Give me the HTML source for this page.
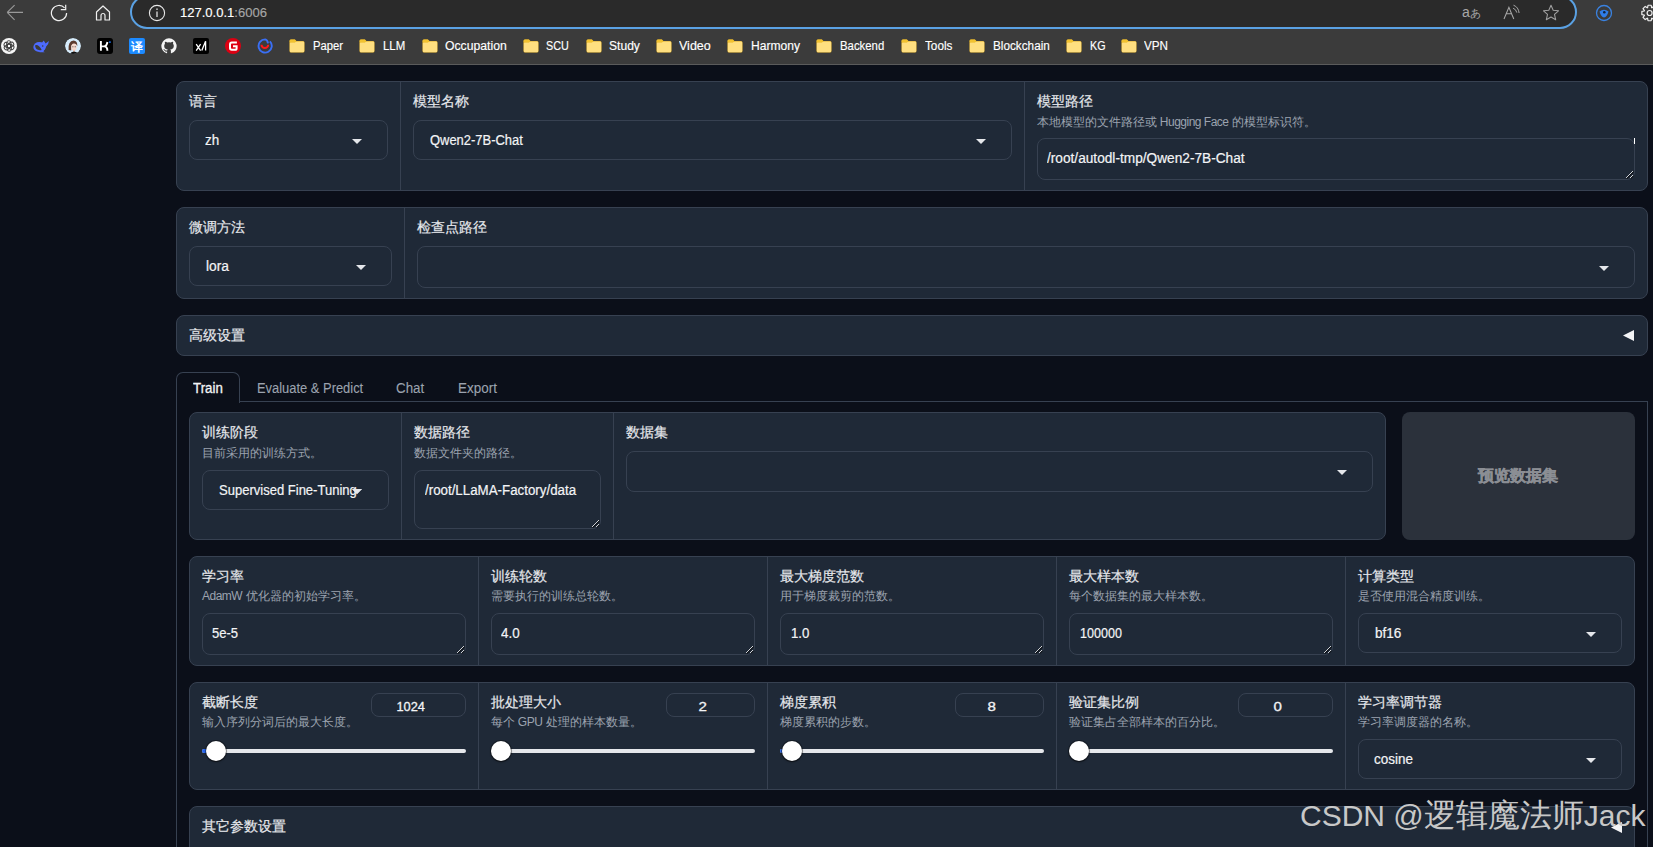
<!DOCTYPE html>
<html><head><meta charset="utf-8"><title>LLaMA Board</title>
<style>
html,body{margin:0;padding:0}
body{width:1653px;height:847px;overflow:hidden;background:#0b0f19;position:relative;font-family:"Liberation Sans",sans-serif}
.a{position:absolute}
.t{white-space:nowrap}
svg text{font-family:"Liberation Sans",sans-serif}
</style></head><body>

<div class="a" style="left:0px;top:0px;width:1653px;height:64px;background:#3b3b3b"></div>
<div class="a" style="left:0px;top:64px;width:1653px;height:1px;background:#5b5b5b"></div>
<svg class="a" style="left:6px;top:4px" width="18" height="18" viewBox="0 0 18 18"><path d="M1.2 8.4H17M1.2 8.4L8.6 1.2M1.2 8.4L8.6 15.8" stroke="#9a9a9a" stroke-width="1.1" fill="none"/></svg>
<svg class="a" style="left:50px;top:4px" width="18" height="18" viewBox="0 0 18 18"><path d="M16.6 9A7.6 7.6 0 1 1 14.6 3.9" stroke="#f0f0f0" stroke-width="1.2" fill="none"/><path d="M10.8 5.6H15.7V0.8" stroke="#f0f0f0" stroke-width="1.2" fill="none"/></svg>
<svg class="a" style="left:94px;top:4px" width="18" height="18" viewBox="0 0 18 18"><path d="M2.5 8L9 2L15.5 8V16H11V11.5A2 2 0 0 0 7 11.5V16H2.5Z" stroke="#f0f0f0" stroke-width="1.2" fill="none" stroke-linejoin="round"/></svg>
<div class="a" style="left:130px;top:-5px;width:1447px;height:34px;border:2px solid #5aa1e3;border-radius:17px;box-sizing:border-box;background:#2a2a2a"></div>
<svg class="a" style="left:148px;top:4px" width="18" height="18" viewBox="0 0 18 18"><circle cx="9" cy="9" r="7.6" stroke="#e8e8e8" stroke-width="1.1" fill="none"/><path d="M9 7.5V13" stroke="#bdbdbd" stroke-width="1.6"/><circle cx="9" cy="5.2" r="0.9" fill="#bdbdbd"/></svg>
<svg class="a" style="left:180.4px;top:0px" width="110" height="26"><text x="0" y="17.4" font-size="13.5" fill="#ffffff" textLength="87" lengthAdjust="spacingAndGlyphs" stroke="#ffffff" stroke-width="0.15">127.0.0.1<tspan fill="#a6a6a6" stroke="#a6a6a6">:6006</tspan></text></svg>
<div class="a t" style="left:1462px;top:2px;font-size:14px;line-height:20px;color:#a8a8a8;font-weight:normal;">a<span style="font-size:11px;position:relative;top:-0.5px">あ</span></div>
<svg class="a" style="left:1503px;top:4px" width="18" height="18" viewBox="0 0 18 18"><path d="M1 15L5.9 3.4L10.8 15M2.7 9.8H9.1" stroke="#a8a8a8" stroke-width="1.05" fill="none"/><path d="M10.1 4.2Q13.2 5.4 13.8 8.6M10.5 1.2Q15.4 3 16.1 9" stroke="#a8a8a8" stroke-width="1" fill="none"/></svg>
<svg class="a" style="left:1542px;top:4px" width="18" height="18" viewBox="0 0 18 18"><path d="M9 1.3L11.2 6.3L16.5 6.8L12.5 10.4L13.7 15.8L9 13L4.3 15.8L5.5 10.4L1.5 6.8L6.8 6.3Z" stroke="#a0a0a0" stroke-width="1.05" fill="none" stroke-linejoin="round"/></svg>
<svg class="a" style="left:1595px;top:4px" width="18" height="18" viewBox="0 0 18 18"><circle cx="9" cy="9" r="7.5" stroke="#3a82e0" stroke-width="1.3" fill="none"/><path d="M4.5 7.5Q9 4 13.5 7.5Q12 13 9 13.5Q6 13 4.5 7.5Z" fill="#2f7de8"/><circle cx="9.3" cy="8.3" r="1.3" fill="#10233f"/></svg>
<svg class="a" style="left:1638px;top:3px" width="15" height="20" viewBox="0 0 15 20"><path d="M16.93 7.99L19.34 8.43L19.34 11.57L16.93 12.01L16.79 12.35L18.18 14.36L15.96 16.58L13.95 15.19L13.61 15.33L13.17 17.74L10.03 17.74L9.59 15.33L9.25 15.19L7.24 16.58L5.02 14.36L6.41 12.35L6.27 12.01L3.86 11.57L3.86 8.43L6.27 7.99L6.41 7.65L5.02 5.64L7.24 3.42L9.25 4.81L9.59 4.67L10.03 2.26L13.17 2.26L13.61 4.67L13.95 4.81L15.96 3.42L18.18 5.64L16.79 7.65Z" stroke="#f0f0f0" stroke-width="1.2" fill="none" stroke-linejoin="round"/><circle cx="11.6" cy="10" r="2.5" stroke="#f0f0f0" stroke-width="1.2" fill="none"/></svg>
<svg class="a" style="left:1px;top:38px" width="16" height="16" viewBox="0 0 16 16"><circle cx="8" cy="8" r="8" fill="#f6f6f6"/><g stroke="#3a3a3a" stroke-width="0.9" fill="none"><rect x="5.6" y="2.7" width="4.4" height="7" rx="2.2" transform="rotate(0 8 8)"/><rect x="5.6" y="2.7" width="4.4" height="7" rx="2.2" transform="rotate(60 8 8)"/><rect x="5.6" y="2.7" width="4.4" height="7" rx="2.2" transform="rotate(120 8 8)"/><rect x="5.6" y="2.7" width="4.4" height="7" rx="2.2" transform="rotate(180 8 8)"/><rect x="5.6" y="2.7" width="4.4" height="7" rx="2.2" transform="rotate(240 8 8)"/><rect x="5.6" y="2.7" width="4.4" height="7" rx="2.2" transform="rotate(300 8 8)"/></g><circle cx="8" cy="8" r="1.2" fill="#fff"/></svg>
<svg class="a" style="left:33px;top:40px" width="17" height="13" viewBox="0 0 17 13"><ellipse cx="6.3" cy="7" rx="6" ry="5.1" fill="#4d6bfe"/><path d="M8.6 3.2L10.6 0.6Q11.8 2.2 12.6 3.4L15.9 0.9Q15.6 4.6 13.2 6.6Q12.6 9.6 10.3 11.2L11.8 12.2H6.5Z" fill="#4d6bfe"/><path d="M2.1 5.3Q5.5 3.9 8.7 10Q5.2 10.6 3.4 9.1Q1.9 7.5 2.1 5.3Z" fill="#3b3b3b"/><circle cx="9.7" cy="6" r="0.8" fill="#3b3b3b"/></svg>
<svg class="a" style="left:65px;top:38px" width="16" height="16" viewBox="0 0 16 16"><defs><clipPath id="cav"><circle cx="8" cy="8" r="8"/></clipPath></defs><g clip-path="url(#cav)"><circle cx="8" cy="8" r="8" fill="#d6ecfb"/><path d="M3.6 12Q2.8 3 8.6 2.4Q12.6 2.6 12.3 8.2L11 6.2Q8.4 5.6 6.4 7.6L6.2 12.4Z" fill="#5b3a2e"/><ellipse cx="9" cy="8.9" rx="2.7" ry="3.5" fill="#f6d8cc"/><circle cx="7.9" cy="8.7" r="0.55" fill="#333"/><circle cx="10.2" cy="8.7" r="0.55" fill="#333"/><rect x="8" y="11.8" width="2" height="2" fill="#f0c9bb"/><path d="M4.8 16.5Q5.6 13.4 9 13.4Q12.4 13.4 13.2 16.5Z" fill="#111"/></g></svg>
<svg class="a" style="left:97px;top:38px" width="16" height="16" viewBox="0 0 16 16"><rect width="16" height="16" rx="3" fill="#000"/><path d="M3.9 3V12.8M3.9 8.4H7.2Q9.7 8.2 10.4 4M7.2 8.4Q10.4 8.6 10.4 12.8" stroke="#fff" stroke-width="1.9" fill="none"/><circle cx="12.9" cy="4.1" r="0.95" fill="#1e7bff"/></svg>
<svg class="a" style="left:129px;top:38px" width="16" height="16" viewBox="0 0 16 16"><rect width="16" height="16" rx="2" fill="#1c8aff"/><text x="8" y="12.5" text-anchor="middle" font-size="12" fill="#fff" font-weight="bold">译</text></svg>
<svg class="a" style="left:161px;top:38px" width="16" height="16" viewBox="0 0 16 16"><path d="M8 0.3A7.7 7.7 0 0 0 5.6 15.3C6 15.4 6.1 15.2 6.1 15V13.6C4 14.1 3.5 12.6 3.5 12.6C3.2 11.7 2.6 11.4 2.6 11.4C1.9 10.9 2.7 10.9 2.7 10.9C3.5 11 3.9 11.7 3.9 11.7C4.6 12.9 5.8 12.6 6.2 12.4C6.2 11.9 6.5 11.6 6.7 11.4C5 11.2 3.2 10.6 3.2 7.7C3.2 6.9 3.5 6.2 4 5.7C3.9 5.5 3.6 4.7 4.1 3.7C4.1 3.7 4.7 3.5 6.1 4.4A7.3 7.3 0 0 1 10 4.4C11.3 3.5 11.9 3.7 11.9 3.7C12.4 4.7 12.1 5.5 12 5.7C12.5 6.2 12.8 6.9 12.8 7.7C12.8 10.6 11 11.2 9.3 11.4C9.6 11.7 9.9 12.1 9.9 12.8V15C9.9 15.2 10 15.4 10.4 15.3A7.7 7.7 0 0 0 8 0.3Z" fill="#f4f4f4"/></svg>
<svg class="a" style="left:193px;top:38px" width="16" height="16" viewBox="0 0 16 16"><rect width="16" height="16" rx="2" fill="#000"/><path d="M3.2 6.2L7.6 12.6M7.6 6.2L3.2 12.6M8.8 12.6L12.6 3.2V12.6" stroke="#fff" stroke-width="1.3" fill="none"/></svg>
<svg class="a" style="left:225px;top:38px" width="16" height="16" viewBox="0 0 16 16"><circle cx="8" cy="8" r="8" fill="#dc0012"/><path d="M11.9 4.4H6.8Q5 4.4 5 6.4V10.1Q5 11.8 6.8 11.8H10.1Q11.6 11.8 11.6 10.2V8.3H8" stroke="#fff" stroke-width="2" fill="none"/></svg>
<svg class="a" style="left:257px;top:38px" width="16" height="16" viewBox="0 0 16 16"><path d="M12.9 3.4A6.6 6.6 0 1 1 8.2 1.4Q10.5 1.7 11 5.4" stroke="#3a6ff5" stroke-width="1.9" fill="none"/><path d="M3.5 6.7A4.35 4.35 0 0 0 12.2 6.7H10.2A2.35 2.35 0 0 1 5.5 6.7Z" fill="#ff1a1a"/></svg>
<svg class="a" style="left:289px;top:39px" width="16" height="14" viewBox="0 0 16 14"><path d="M0.5 2A1.5 1.5 0 0 1 2 0.5H6L7.5 2H14A1.5 1.5 0 0 1 15.5 3.5V12A1.5 1.5 0 0 1 14 13.5H2A1.5 1.5 0 0 1 0.5 12Z" fill="#d9a92a"/><path d="M0.8 4A1 1 0 0 1 1.8 3.2H6L7.5 2.4H14.2A1.2 1.2 0 0 1 15.2 3.4V12A1.2 1.2 0 0 1 14 13.2H2A1.2 1.2 0 0 1 0.8 12Z" fill="#ffdf80"/><path d="M0.6 1.8Q0.7 0.6 2 0.6H5.8L7.4 2.2L5.8 3.5H0.6Z" fill="#f2c230"/></svg>
<svg class="a" style="left:313.1px;top:36.1px" width="49" height="19"><text x="0.0" y="14.4" font-size="12" fill="#ffffff" font-weight="normal" textLength="30.0" lengthAdjust="spacingAndGlyphs" text-anchor="start" stroke="#ffffff" stroke-width="0.15">Paper</text></svg>
<svg class="a" style="left:359px;top:39px" width="16" height="14" viewBox="0 0 16 14"><path d="M0.5 2A1.5 1.5 0 0 1 2 0.5H6L7.5 2H14A1.5 1.5 0 0 1 15.5 3.5V12A1.5 1.5 0 0 1 14 13.5H2A1.5 1.5 0 0 1 0.5 12Z" fill="#d9a92a"/><path d="M0.8 4A1 1 0 0 1 1.8 3.2H6L7.5 2.4H14.2A1.2 1.2 0 0 1 15.2 3.4V12A1.2 1.2 0 0 1 14 13.2H2A1.2 1.2 0 0 1 0.8 12Z" fill="#ffdf80"/><path d="M0.6 1.8Q0.7 0.6 2 0.6H5.8L7.4 2.2L5.8 3.5H0.6Z" fill="#f2c230"/></svg>
<svg class="a" style="left:382.7px;top:36.1px" width="41" height="19"><text x="0.0" y="14.4" font-size="12" fill="#ffffff" font-weight="normal" textLength="22.2" lengthAdjust="spacingAndGlyphs" text-anchor="start" stroke="#ffffff" stroke-width="0.15">LLM</text></svg>
<svg class="a" style="left:422px;top:39px" width="16" height="14" viewBox="0 0 16 14"><path d="M0.5 2A1.5 1.5 0 0 1 2 0.5H6L7.5 2H14A1.5 1.5 0 0 1 15.5 3.5V12A1.5 1.5 0 0 1 14 13.5H2A1.5 1.5 0 0 1 0.5 12Z" fill="#d9a92a"/><path d="M0.8 4A1 1 0 0 1 1.8 3.2H6L7.5 2.4H14.2A1.2 1.2 0 0 1 15.2 3.4V12A1.2 1.2 0 0 1 14 13.2H2A1.2 1.2 0 0 1 0.8 12Z" fill="#ffdf80"/><path d="M0.6 1.8Q0.7 0.6 2 0.6H5.8L7.4 2.2L5.8 3.5H0.6Z" fill="#f2c230"/></svg>
<svg class="a" style="left:445.1px;top:36.1px" width="81" height="19"><text x="0.0" y="14.4" font-size="12" fill="#ffffff" font-weight="normal" textLength="61.7" lengthAdjust="spacingAndGlyphs" text-anchor="start" stroke="#ffffff" stroke-width="0.15">Occupation</text></svg>
<svg class="a" style="left:523px;top:39px" width="16" height="14" viewBox="0 0 16 14"><path d="M0.5 2A1.5 1.5 0 0 1 2 0.5H6L7.5 2H14A1.5 1.5 0 0 1 15.5 3.5V12A1.5 1.5 0 0 1 14 13.5H2A1.5 1.5 0 0 1 0.5 12Z" fill="#d9a92a"/><path d="M0.8 4A1 1 0 0 1 1.8 3.2H6L7.5 2.4H14.2A1.2 1.2 0 0 1 15.2 3.4V12A1.2 1.2 0 0 1 14 13.2H2A1.2 1.2 0 0 1 0.8 12Z" fill="#ffdf80"/><path d="M0.6 1.8Q0.7 0.6 2 0.6H5.8L7.4 2.2L5.8 3.5H0.6Z" fill="#f2c230"/></svg>
<svg class="a" style="left:546.2px;top:36.1px" width="42" height="19"><text x="0.0" y="14.4" font-size="12" fill="#ffffff" font-weight="normal" textLength="22.8" lengthAdjust="spacingAndGlyphs" text-anchor="start" stroke="#ffffff" stroke-width="0.15">SCU</text></svg>
<svg class="a" style="left:586px;top:39px" width="16" height="14" viewBox="0 0 16 14"><path d="M0.5 2A1.5 1.5 0 0 1 2 0.5H6L7.5 2H14A1.5 1.5 0 0 1 15.5 3.5V12A1.5 1.5 0 0 1 14 13.5H2A1.5 1.5 0 0 1 0.5 12Z" fill="#d9a92a"/><path d="M0.8 4A1 1 0 0 1 1.8 3.2H6L7.5 2.4H14.2A1.2 1.2 0 0 1 15.2 3.4V12A1.2 1.2 0 0 1 14 13.2H2A1.2 1.2 0 0 1 0.8 12Z" fill="#ffdf80"/><path d="M0.6 1.8Q0.7 0.6 2 0.6H5.8L7.4 2.2L5.8 3.5H0.6Z" fill="#f2c230"/></svg>
<svg class="a" style="left:609.2px;top:36.1px" width="50" height="19"><text x="0.0" y="14.4" font-size="12" fill="#ffffff" font-weight="normal" textLength="30.9" lengthAdjust="spacingAndGlyphs" text-anchor="start" stroke="#ffffff" stroke-width="0.15">Study</text></svg>
<svg class="a" style="left:656px;top:39px" width="16" height="14" viewBox="0 0 16 14"><path d="M0.5 2A1.5 1.5 0 0 1 2 0.5H6L7.5 2H14A1.5 1.5 0 0 1 15.5 3.5V12A1.5 1.5 0 0 1 14 13.5H2A1.5 1.5 0 0 1 0.5 12Z" fill="#d9a92a"/><path d="M0.8 4A1 1 0 0 1 1.8 3.2H6L7.5 2.4H14.2A1.2 1.2 0 0 1 15.2 3.4V12A1.2 1.2 0 0 1 14 13.2H2A1.2 1.2 0 0 1 0.8 12Z" fill="#ffdf80"/><path d="M0.6 1.8Q0.7 0.6 2 0.6H5.8L7.4 2.2L5.8 3.5H0.6Z" fill="#f2c230"/></svg>
<svg class="a" style="left:679.1px;top:36.1px" width="51" height="19"><text x="0.0" y="14.4" font-size="12" fill="#ffffff" font-weight="normal" textLength="31.8" lengthAdjust="spacingAndGlyphs" text-anchor="start" stroke="#ffffff" stroke-width="0.15">Video</text></svg>
<svg class="a" style="left:727px;top:39px" width="16" height="14" viewBox="0 0 16 14"><path d="M0.5 2A1.5 1.5 0 0 1 2 0.5H6L7.5 2H14A1.5 1.5 0 0 1 15.5 3.5V12A1.5 1.5 0 0 1 14 13.5H2A1.5 1.5 0 0 1 0.5 12Z" fill="#d9a92a"/><path d="M0.8 4A1 1 0 0 1 1.8 3.2H6L7.5 2.4H14.2A1.2 1.2 0 0 1 15.2 3.4V12A1.2 1.2 0 0 1 14 13.2H2A1.2 1.2 0 0 1 0.8 12Z" fill="#ffdf80"/><path d="M0.6 1.8Q0.7 0.6 2 0.6H5.8L7.4 2.2L5.8 3.5H0.6Z" fill="#f2c230"/></svg>
<svg class="a" style="left:750.8px;top:36.1px" width="68" height="19"><text x="0.0" y="14.4" font-size="12" fill="#ffffff" font-weight="normal" textLength="49.0" lengthAdjust="spacingAndGlyphs" text-anchor="start" stroke="#ffffff" stroke-width="0.15">Harmony</text></svg>
<svg class="a" style="left:816px;top:39px" width="16" height="14" viewBox="0 0 16 14"><path d="M0.5 2A1.5 1.5 0 0 1 2 0.5H6L7.5 2H14A1.5 1.5 0 0 1 15.5 3.5V12A1.5 1.5 0 0 1 14 13.5H2A1.5 1.5 0 0 1 0.5 12Z" fill="#d9a92a"/><path d="M0.8 4A1 1 0 0 1 1.8 3.2H6L7.5 2.4H14.2A1.2 1.2 0 0 1 15.2 3.4V12A1.2 1.2 0 0 1 14 13.2H2A1.2 1.2 0 0 1 0.8 12Z" fill="#ffdf80"/><path d="M0.6 1.8Q0.7 0.6 2 0.6H5.8L7.4 2.2L5.8 3.5H0.6Z" fill="#f2c230"/></svg>
<svg class="a" style="left:840.1px;top:36.1px" width="63" height="19"><text x="0.0" y="14.4" font-size="12" fill="#ffffff" font-weight="normal" textLength="44.2" lengthAdjust="spacingAndGlyphs" text-anchor="start" stroke="#ffffff" stroke-width="0.15">Backend</text></svg>
<svg class="a" style="left:901px;top:39px" width="16" height="14" viewBox="0 0 16 14"><path d="M0.5 2A1.5 1.5 0 0 1 2 0.5H6L7.5 2H14A1.5 1.5 0 0 1 15.5 3.5V12A1.5 1.5 0 0 1 14 13.5H2A1.5 1.5 0 0 1 0.5 12Z" fill="#d9a92a"/><path d="M0.8 4A1 1 0 0 1 1.8 3.2H6L7.5 2.4H14.2A1.2 1.2 0 0 1 15.2 3.4V12A1.2 1.2 0 0 1 14 13.2H2A1.2 1.2 0 0 1 0.8 12Z" fill="#ffdf80"/><path d="M0.6 1.8Q0.7 0.6 2 0.6H5.8L7.4 2.2L5.8 3.5H0.6Z" fill="#f2c230"/></svg>
<svg class="a" style="left:924.7px;top:36.1px" width="46" height="19"><text x="0.0" y="14.4" font-size="12" fill="#ffffff" font-weight="normal" textLength="27.4" lengthAdjust="spacingAndGlyphs" text-anchor="start" stroke="#ffffff" stroke-width="0.15">Tools</text></svg>
<svg class="a" style="left:969px;top:39px" width="16" height="14" viewBox="0 0 16 14"><path d="M0.5 2A1.5 1.5 0 0 1 2 0.5H6L7.5 2H14A1.5 1.5 0 0 1 15.5 3.5V12A1.5 1.5 0 0 1 14 13.5H2A1.5 1.5 0 0 1 0.5 12Z" fill="#d9a92a"/><path d="M0.8 4A1 1 0 0 1 1.8 3.2H6L7.5 2.4H14.2A1.2 1.2 0 0 1 15.2 3.4V12A1.2 1.2 0 0 1 14 13.2H2A1.2 1.2 0 0 1 0.8 12Z" fill="#ffdf80"/><path d="M0.6 1.8Q0.7 0.6 2 0.6H5.8L7.4 2.2L5.8 3.5H0.6Z" fill="#f2c230"/></svg>
<svg class="a" style="left:993.0px;top:36.1px" width="76" height="19"><text x="0.0" y="14.4" font-size="12" fill="#ffffff" font-weight="normal" textLength="56.8" lengthAdjust="spacingAndGlyphs" text-anchor="start" stroke="#ffffff" stroke-width="0.15">Blockchain</text></svg>
<svg class="a" style="left:1066px;top:39px" width="16" height="14" viewBox="0 0 16 14"><path d="M0.5 2A1.5 1.5 0 0 1 2 0.5H6L7.5 2H14A1.5 1.5 0 0 1 15.5 3.5V12A1.5 1.5 0 0 1 14 13.5H2A1.5 1.5 0 0 1 0.5 12Z" fill="#d9a92a"/><path d="M0.8 4A1 1 0 0 1 1.8 3.2H6L7.5 2.4H14.2A1.2 1.2 0 0 1 15.2 3.4V12A1.2 1.2 0 0 1 14 13.2H2A1.2 1.2 0 0 1 0.8 12Z" fill="#ffdf80"/><path d="M0.6 1.8Q0.7 0.6 2 0.6H5.8L7.4 2.2L5.8 3.5H0.6Z" fill="#f2c230"/></svg>
<svg class="a" style="left:1089.5px;top:36.1px" width="34" height="19"><text x="0.0" y="14.4" font-size="12" fill="#ffffff" font-weight="normal" textLength="15.5" lengthAdjust="spacingAndGlyphs" text-anchor="start" stroke="#ffffff" stroke-width="0.15">KG</text></svg>
<svg class="a" style="left:1121px;top:39px" width="16" height="14" viewBox="0 0 16 14"><path d="M0.5 2A1.5 1.5 0 0 1 2 0.5H6L7.5 2H14A1.5 1.5 0 0 1 15.5 3.5V12A1.5 1.5 0 0 1 14 13.5H2A1.5 1.5 0 0 1 0.5 12Z" fill="#d9a92a"/><path d="M0.8 4A1 1 0 0 1 1.8 3.2H6L7.5 2.4H14.2A1.2 1.2 0 0 1 15.2 3.4V12A1.2 1.2 0 0 1 14 13.2H2A1.2 1.2 0 0 1 0.8 12Z" fill="#ffdf80"/><path d="M0.6 1.8Q0.7 0.6 2 0.6H5.8L7.4 2.2L5.8 3.5H0.6Z" fill="#f2c230"/></svg>
<svg class="a" style="left:1144.2px;top:36.1px" width="43" height="19"><text x="0.0" y="14.4" font-size="12" fill="#ffffff" font-weight="normal" textLength="24.0" lengthAdjust="spacingAndGlyphs" text-anchor="start" stroke="#ffffff" stroke-width="0.15">VPN</text></svg>
<div class="a" style="left:176px;top:81px;width:1472px;height:110px;border:1px solid #374151;border-radius:8px;box-sizing:border-box;background:#1f2937"></div>
<div class="a" style="left:400px;top:82px;width:1px;height:108px;background:#374151"></div>
<div class="a" style="left:1024px;top:82px;width:1px;height:108px;background:#374151"></div>
<div class="a t" style="left:189px;top:91px;font-size:14px;line-height:20px;color:#e5e7eb;font-weight:normal;-webkit-text-stroke:0.2px #e5e7eb">语言</div>
<div class="a" style="left:189px;top:120px;width:199px;height:40px;border:1px solid #374151;border-radius:8px;box-sizing:border-box;background:#1f2937"></div>
<svg class="a" style="left:352.0px;top:138.5px" width="10" height="5"><path d="M0 0H10L5.0 5Z" fill="#e5e7eb"/></svg>
<svg class="a" style="left:205.4px;top:128.3px" width="33" height="22"><text x="0.0" y="16.8" font-size="14" fill="#f3f4f6" font-weight="normal" textLength="14.2" lengthAdjust="spacingAndGlyphs" text-anchor="start" stroke="#f3f4f6" stroke-width="0.2">zh</text></svg>
<div class="a t" style="left:413px;top:91px;font-size:14px;line-height:20px;color:#e5e7eb;font-weight:normal;-webkit-text-stroke:0.2px #e5e7eb">模型名称</div>
<div class="a" style="left:413px;top:120px;width:599px;height:40px;border:1px solid #374151;border-radius:8px;box-sizing:border-box;background:#1f2937"></div>
<svg class="a" style="left:976.0px;top:138.5px" width="10" height="5"><path d="M0 0H10L5.0 5Z" fill="#e5e7eb"/></svg>
<svg class="a" style="left:430.3px;top:128.3px" width="112" height="22"><text x="0.0" y="16.8" font-size="14" fill="#f3f4f6" font-weight="normal" textLength="92.8" lengthAdjust="spacingAndGlyphs" text-anchor="start" stroke="#f3f4f6" stroke-width="0.2">Qwen2-7B-Chat</text></svg>
<div class="a t" style="left:1037px;top:91px;font-size:14px;line-height:20px;color:#e5e7eb;font-weight:normal;-webkit-text-stroke:0.2px #e5e7eb">模型路径</div>
<div class="a t" style="left:1037px;top:114px;font-size:12px;line-height:16px;color:#9ca3af;font-weight:normal;">本地模型的文件路径或<span style="letter-spacing:-0.5px"> Hugging Face</span> 的模型标识符。</div>
<div class="a" style="left:1037px;top:138px;width:598px;height:42px;border:1px solid #374151;border-radius:8px;box-sizing:border-box;background:#1f2937"></div>
<svg class="a" style="left:1624.5px;top:170px" width="10" height="10"><path d="M1.6 8.6L8.6 1.6M5.6 8.6L8.6 5.6" stroke="#000" stroke-opacity=".6" stroke-width="1.2"/><path d="M1 8L8 1M5 8L8 5" stroke="#d0d3d8" stroke-width="1"/></svg>
<svg class="a" style="left:1047.1px;top:146.2px" width="217" height="22"><text x="0.0" y="16.8" font-size="14" fill="#f3f4f6" font-weight="normal" textLength="197.6" lengthAdjust="spacingAndGlyphs" text-anchor="start" stroke="#f3f4f6" stroke-width="0.2">/root/autodl-tmp/Qwen2-7B-Chat</text></svg>
<div class="a" style="left:1634px;top:138px;width:1px;height:6px;background:#ffffff"></div>
<div class="a" style="left:176px;top:207px;width:1472px;height:92px;border:1px solid #374151;border-radius:8px;box-sizing:border-box;background:#1f2937"></div>
<div class="a" style="left:404px;top:208px;width:1px;height:90px;background:#374151"></div>
<div class="a t" style="left:189px;top:217px;font-size:14px;line-height:20px;color:#e5e7eb;font-weight:normal;-webkit-text-stroke:0.2px #e5e7eb">微调方法</div>
<div class="a" style="left:189px;top:246px;width:203px;height:40px;border:1px solid #374151;border-radius:8px;box-sizing:border-box;background:#1f2937"></div>
<svg class="a" style="left:356.0px;top:264.5px" width="10" height="5"><path d="M0 0H10L5.0 5Z" fill="#e5e7eb"/></svg>
<svg class="a" style="left:205.8px;top:254.2px" width="42" height="22"><text x="0.0" y="16.8" font-size="14" fill="#f3f4f6" font-weight="normal" textLength="23.0" lengthAdjust="spacingAndGlyphs" text-anchor="start" stroke="#f3f4f6" stroke-width="0.2">lora</text></svg>
<div class="a t" style="left:417px;top:217px;font-size:14px;line-height:20px;color:#e5e7eb;font-weight:normal;-webkit-text-stroke:0.2px #e5e7eb">检查点路径</div>
<div class="a" style="left:417px;top:246px;width:1218px;height:42px;border:1px solid #374151;border-radius:8px;box-sizing:border-box;background:#1f2937"></div>
<svg class="a" style="left:1599.0px;top:265.5px" width="10" height="5"><path d="M0 0H10L5.0 5Z" fill="#e5e7eb"/></svg>
<div class="a" style="left:176px;top:315px;width:1472px;height:41px;border:1px solid #374151;border-radius:8px;box-sizing:border-box;background:#1f2937"></div>
<div class="a t" style="left:189px;top:325px;font-size:14px;line-height:20px;color:#e5e7eb;font-weight:normal;-webkit-text-stroke:0.2px #e5e7eb">高级设置</div>
<svg class="a" style="left:1623px;top:330px" width="11" height="11" viewBox="0 0 11 11"><path d="M0 5.5L11 0V11Z" fill="#f3f4f6"/></svg>
<div class="a" style="left:176px;top:401px;width:1472px;height:1px;background:#374151"></div>
<div class="a" style="left:176px;top:372px;width:64px;height:31px;border:1px solid #374151;border-bottom:none;border-radius:7px 7px 0 0;box-sizing:border-box;background:#0b0f19"></div>
<svg class="a" style="left:192.9px;top:375.7px" width="49" height="22"><text x="0.0" y="16.8" font-size="14" fill="#f3f4f6" font-weight="normal" textLength="29.8" lengthAdjust="spacingAndGlyphs" text-anchor="start" stroke="#f3f4f6" stroke-width="0.3">Train</text></svg>
<svg class="a" style="left:256.5px;top:375.7px" width="125" height="22"><text x="0.0" y="16.8" font-size="14" fill="#9ca3af" font-weight="normal" textLength="106.2" lengthAdjust="spacingAndGlyphs" text-anchor="start" stroke="#9ca3af" stroke-width="0.1">Evaluate &amp; Predict</text></svg>
<svg class="a" style="left:395.9px;top:375.7px" width="47" height="22"><text x="0.0" y="16.8" font-size="14" fill="#9ca3af" font-weight="normal" textLength="28.2" lengthAdjust="spacingAndGlyphs" text-anchor="start" stroke="#9ca3af" stroke-width="0.1">Chat</text></svg>
<svg class="a" style="left:457.5px;top:375.7px" width="58" height="22"><text x="0.0" y="16.8" font-size="14" fill="#9ca3af" font-weight="normal" textLength="38.9" lengthAdjust="spacingAndGlyphs" text-anchor="start" stroke="#9ca3af" stroke-width="0.1">Export</text></svg>
<div class="a" style="left:176px;top:401px;width:1px;height:446px;background:#374151"></div>
<div class="a" style="left:1647px;top:401px;width:1px;height:446px;background:#374151"></div>
<div class="a" style="left:189px;top:412px;width:1197px;height:128px;border:1px solid #374151;border-radius:8px;box-sizing:border-box;background:#1f2937"></div>
<div class="a" style="left:401px;top:413px;width:1px;height:126px;background:#374151"></div>
<div class="a" style="left:613px;top:413px;width:1px;height:126px;background:#374151"></div>
<div class="a t" style="left:202px;top:422px;font-size:14px;line-height:20px;color:#e5e7eb;font-weight:normal;-webkit-text-stroke:0.2px #e5e7eb">训练阶段</div>
<div class="a t" style="left:202px;top:445px;font-size:12px;line-height:16px;color:#9ca3af;font-weight:normal;">目前采用的训练方式。</div>
<div class="a" style="left:202px;top:470px;width:187px;height:40px;border:1px solid #374151;border-radius:8px;box-sizing:border-box;background:#1f2937"></div>
<svg class="a" style="left:352.0px;top:488.5px" width="10" height="5"><path d="M0 0H10L5.0 5Z" fill="#e5e7eb"/></svg>
<svg class="a" style="left:218.6px;top:478.2px" width="157" height="22"><text x="0.0" y="16.8" font-size="14" fill="#f3f4f6" font-weight="normal" textLength="137.8" lengthAdjust="spacingAndGlyphs" text-anchor="start" stroke="#f3f4f6" stroke-width="0.2">Supervised Fine-Tuning</text></svg>
<svg class="a" style="left:352.0px;top:488.5px" width="10" height="5"><path d="M0 0H10L5.0 5Z" fill="#e5e7eb"/></svg>
<div class="a t" style="left:414px;top:422px;font-size:14px;line-height:20px;color:#e5e7eb;font-weight:normal;-webkit-text-stroke:0.2px #e5e7eb">数据路径</div>
<div class="a t" style="left:414px;top:445px;font-size:12px;line-height:16px;color:#9ca3af;font-weight:normal;">数据文件夹的路径。</div>
<div class="a" style="left:414px;top:470px;width:187px;height:59px;border:1px solid #374151;border-radius:8px;box-sizing:border-box;background:#1f2937"></div>
<svg class="a" style="left:590.5px;top:519px" width="10" height="10"><path d="M1.6 8.6L8.6 1.6M5.6 8.6L8.6 5.6" stroke="#000" stroke-opacity=".6" stroke-width="1.2"/><path d="M1 8L8 1M5 8L8 5" stroke="#d0d3d8" stroke-width="1"/></svg>
<svg class="a" style="left:424.7px;top:478.2px" width="170" height="22"><text x="0.0" y="16.8" font-size="14" fill="#f3f4f6" font-weight="normal" textLength="151.1" lengthAdjust="spacingAndGlyphs" text-anchor="start" stroke="#f3f4f6" stroke-width="0.2">/root/LLaMA-Factory/data</text></svg>
<div class="a t" style="left:626px;top:422px;font-size:14px;line-height:20px;color:#e5e7eb;font-weight:normal;-webkit-text-stroke:0.2px #e5e7eb">数据集</div>
<div class="a" style="left:626px;top:451px;width:747px;height:41px;border:1px solid #374151;border-radius:8px;box-sizing:border-box;background:#1f2937"></div>
<svg class="a" style="left:1337.0px;top:470.0px" width="10" height="5"><path d="M0 0H10L5.0 5Z" fill="#e5e7eb"/></svg>
<div class="a" style="left:1402px;top:412px;width:233px;height:128px;background:#2b313b;border-radius:8px"></div>
<div class="a t" style="left:1478px;top:465px;font-size:16px;line-height:22px;color:#8b8e94;font-weight:bold;-webkit-text-stroke:0.4px #8b8e94">预览数据集</div>
<div class="a" style="left:189px;top:556px;width:1446px;height:110px;border:1px solid #374151;border-radius:8px;box-sizing:border-box;background:#1f2937"></div>
<div class="a" style="left:478px;top:557px;width:1px;height:108px;background:#374151"></div>
<div class="a" style="left:767px;top:557px;width:1px;height:108px;background:#374151"></div>
<div class="a" style="left:1056px;top:557px;width:1px;height:108px;background:#374151"></div>
<div class="a" style="left:1345px;top:557px;width:1px;height:108px;background:#374151"></div>
<div class="a t" style="left:202px;top:566px;font-size:14px;line-height:20px;color:#e5e7eb;font-weight:normal;-webkit-text-stroke:0.2px #e5e7eb">学习率</div>
<div class="a t" style="left:202px;top:588px;font-size:12px;line-height:16px;color:#9ca3af;font-weight:normal;"><span style="letter-spacing:-0.5px">AdamW</span> 优化器的初始学习率。</div>
<div class="a" style="left:202px;top:613px;width:264px;height:42px;border:1px solid #374151;border-radius:8px;box-sizing:border-box;background:#1f2937"></div>
<svg class="a" style="left:455.5px;top:645px" width="10" height="10"><path d="M1.6 8.6L8.6 1.6M5.6 8.6L8.6 5.6" stroke="#000" stroke-opacity=".6" stroke-width="1.2"/><path d="M1 8L8 1M5 8L8 5" stroke="#d0d3d8" stroke-width="1"/></svg>
<svg class="a" style="left:212.3px;top:621.2px" width="45" height="22"><text x="0.0" y="16.8" font-size="14" fill="#f3f4f6" font-weight="normal" textLength="26.1" lengthAdjust="spacingAndGlyphs" text-anchor="start" stroke="#f3f4f6" stroke-width="0.2">5e-5</text></svg>
<div class="a t" style="left:491px;top:566px;font-size:14px;line-height:20px;color:#e5e7eb;font-weight:normal;-webkit-text-stroke:0.2px #e5e7eb">训练轮数</div>
<div class="a t" style="left:491px;top:588px;font-size:12px;line-height:16px;color:#9ca3af;font-weight:normal;">需要执行的训练总轮数。</div>
<div class="a" style="left:491px;top:613px;width:264px;height:42px;border:1px solid #374151;border-radius:8px;box-sizing:border-box;background:#1f2937"></div>
<svg class="a" style="left:744.5px;top:645px" width="10" height="10"><path d="M1.6 8.6L8.6 1.6M5.6 8.6L8.6 5.6" stroke="#000" stroke-opacity=".6" stroke-width="1.2"/><path d="M1 8L8 1M5 8L8 5" stroke="#d0d3d8" stroke-width="1"/></svg>
<svg class="a" style="left:501.1px;top:621.2px" width="38" height="22"><text x="0.0" y="16.8" font-size="14" fill="#f3f4f6" font-weight="normal" textLength="18.6" lengthAdjust="spacingAndGlyphs" text-anchor="start" stroke="#f3f4f6" stroke-width="0.2">4.0</text></svg>
<div class="a t" style="left:780px;top:566px;font-size:14px;line-height:20px;color:#e5e7eb;font-weight:normal;-webkit-text-stroke:0.2px #e5e7eb">最大梯度范数</div>
<div class="a t" style="left:780px;top:588px;font-size:12px;line-height:16px;color:#9ca3af;font-weight:normal;">用于梯度裁剪的范数。</div>
<div class="a" style="left:780px;top:613px;width:264px;height:42px;border:1px solid #374151;border-radius:8px;box-sizing:border-box;background:#1f2937"></div>
<svg class="a" style="left:1033.5px;top:645px" width="10" height="10"><path d="M1.6 8.6L8.6 1.6M5.6 8.6L8.6 5.6" stroke="#000" stroke-opacity=".6" stroke-width="1.2"/><path d="M1 8L8 1M5 8L8 5" stroke="#d0d3d8" stroke-width="1"/></svg>
<svg class="a" style="left:790.7px;top:621.2px" width="37" height="22"><text x="0.0" y="16.8" font-size="14" fill="#f3f4f6" font-weight="normal" textLength="18.4" lengthAdjust="spacingAndGlyphs" text-anchor="start" stroke="#f3f4f6" stroke-width="0.2">1.0</text></svg>
<div class="a t" style="left:1069px;top:566px;font-size:14px;line-height:20px;color:#e5e7eb;font-weight:normal;-webkit-text-stroke:0.2px #e5e7eb">最大样本数</div>
<div class="a t" style="left:1069px;top:588px;font-size:12px;line-height:16px;color:#9ca3af;font-weight:normal;">每个数据集的最大样本数。</div>
<div class="a" style="left:1069px;top:613px;width:264px;height:42px;border:1px solid #374151;border-radius:8px;box-sizing:border-box;background:#1f2937"></div>
<svg class="a" style="left:1322.5px;top:645px" width="10" height="10"><path d="M1.6 8.6L8.6 1.6M5.6 8.6L8.6 5.6" stroke="#000" stroke-opacity=".6" stroke-width="1.2"/><path d="M1 8L8 1M5 8L8 5" stroke="#d0d3d8" stroke-width="1"/></svg>
<svg class="a" style="left:1080.2px;top:621.2px" width="61" height="22"><text x="0.0" y="16.8" font-size="14" fill="#f3f4f6" font-weight="normal" textLength="41.9" lengthAdjust="spacingAndGlyphs" text-anchor="start" stroke="#f3f4f6" stroke-width="0.2">100000</text></svg>
<div class="a t" style="left:1358px;top:566px;font-size:14px;line-height:20px;color:#e5e7eb;font-weight:normal;-webkit-text-stroke:0.2px #e5e7eb">计算类型</div>
<div class="a t" style="left:1358px;top:588px;font-size:12px;line-height:16px;color:#9ca3af;font-weight:normal;">是否使用混合精度训练。</div>
<div class="a" style="left:1358px;top:613px;width:264px;height:40px;border:1px solid #374151;border-radius:8px;box-sizing:border-box;background:#1f2937"></div>
<svg class="a" style="left:1586.0px;top:631.5px" width="10" height="5"><path d="M0 0H10L5.0 5Z" fill="#e5e7eb"/></svg>
<svg class="a" style="left:1374.9px;top:621.2px" width="45" height="22"><text x="0.0" y="16.8" font-size="14" fill="#f3f4f6" font-weight="normal" textLength="26.4" lengthAdjust="spacingAndGlyphs" text-anchor="start" stroke="#f3f4f6" stroke-width="0.2">bf16</text></svg>
<div class="a" style="left:189px;top:682px;width:1446px;height:108px;border:1px solid #374151;border-radius:8px;box-sizing:border-box;background:#1f2937"></div>
<div class="a" style="left:478px;top:683px;width:1px;height:106px;background:#374151"></div>
<div class="a" style="left:767px;top:683px;width:1px;height:106px;background:#374151"></div>
<div class="a" style="left:1056px;top:683px;width:1px;height:106px;background:#374151"></div>
<div class="a" style="left:1345px;top:683px;width:1px;height:106px;background:#374151"></div>
<div class="a t" style="left:202px;top:692px;font-size:14px;line-height:20px;color:#e5e7eb;font-weight:normal;-webkit-text-stroke:0.2px #e5e7eb">截断长度</div>
<div class="a t" style="left:202px;top:714px;font-size:12px;line-height:16px;color:#9ca3af;font-weight:normal;">输入序列分词后的最大长度。</div>
<div class="a" style="left:371px;top:693px;width:95px;height:24px;border:1px solid #374151;border-radius:8px;box-sizing:border-box"></div>
<svg class="a" style="left:387.0px;top:694.5px" width="47" height="21"><text x="23.7" y="15.6" font-size="13" fill="#f3f4f6" font-weight="normal" textLength="28.4" lengthAdjust="spacingAndGlyphs" text-anchor="middle" stroke="#f3f4f6" stroke-width="0.3">1024</text></svg>
<div class="a" style="left:202px;top:749px;width:264px;height:4px;background:#e5e7eb;border-radius:2px"></div>
<div class="a" style="left:202px;top:749px;width:14px;height:4px;background:#2563eb;border-radius:2px"></div>
<div class="a" style="left:206px;top:741px;width:20px;height:20px;background:#ffffff;border-radius:50%;box-shadow:0 0 0 1px rgba(0,0,0,.3),0 1px 2px rgba(0,0,0,.5)"></div>
<div class="a t" style="left:491px;top:692px;font-size:14px;line-height:20px;color:#e5e7eb;font-weight:normal;-webkit-text-stroke:0.2px #e5e7eb">批处理大小</div>
<div class="a t" style="left:491px;top:714px;font-size:12px;line-height:16px;color:#9ca3af;font-weight:normal;">每个<span style="letter-spacing:-0.5px"> GPU</span> 处理的样本数量。</div>
<div class="a" style="left:666px;top:693px;width:89px;height:24px;border:1px solid #374151;border-radius:8px;box-sizing:border-box"></div>
<svg class="a" style="left:688.8px;top:694.5px" width="27" height="21"><text x="13.7" y="15.6" font-size="13" fill="#f3f4f6" font-weight="normal" textLength="8.4" lengthAdjust="spacingAndGlyphs" text-anchor="middle" stroke="#f3f4f6" stroke-width="0.3">2</text></svg>
<div class="a" style="left:491px;top:749px;width:264px;height:4px;background:#e5e7eb;border-radius:2px"></div>
<div class="a" style="left:491px;top:741px;width:20px;height:20px;background:#ffffff;border-radius:50%;box-shadow:0 0 0 1px rgba(0,0,0,.3),0 1px 2px rgba(0,0,0,.5)"></div>
<div class="a t" style="left:780px;top:692px;font-size:14px;line-height:20px;color:#e5e7eb;font-weight:normal;-webkit-text-stroke:0.2px #e5e7eb">梯度累积</div>
<div class="a t" style="left:780px;top:714px;font-size:12px;line-height:16px;color:#9ca3af;font-weight:normal;">梯度累积的步数。</div>
<div class="a" style="left:955px;top:693px;width:89px;height:24px;border:1px solid #374151;border-radius:8px;box-sizing:border-box"></div>
<svg class="a" style="left:977.7px;top:694.5px" width="27" height="21"><text x="13.7" y="15.6" font-size="13" fill="#f3f4f6" font-weight="normal" textLength="8.4" lengthAdjust="spacingAndGlyphs" text-anchor="middle" stroke="#f3f4f6" stroke-width="0.3">8</text></svg>
<div class="a" style="left:780px;top:749px;width:264px;height:4px;background:#e5e7eb;border-radius:2px"></div>
<div class="a" style="left:780px;top:749px;width:12px;height:4px;background:#2563eb;border-radius:2px"></div>
<div class="a" style="left:782px;top:741px;width:20px;height:20px;background:#ffffff;border-radius:50%;box-shadow:0 0 0 1px rgba(0,0,0,.3),0 1px 2px rgba(0,0,0,.5)"></div>
<div class="a t" style="left:1069px;top:692px;font-size:14px;line-height:20px;color:#e5e7eb;font-weight:normal;-webkit-text-stroke:0.2px #e5e7eb">验证集比例</div>
<div class="a t" style="left:1069px;top:714px;font-size:12px;line-height:16px;color:#9ca3af;font-weight:normal;">验证集占全部样本的百分比。</div>
<div class="a" style="left:1238px;top:693px;width:95px;height:24px;border:1px solid #374151;border-radius:8px;box-sizing:border-box"></div>
<svg class="a" style="left:1263.7px;top:694.5px" width="27" height="21"><text x="13.7" y="15.6" font-size="13" fill="#f3f4f6" font-weight="normal" textLength="8.4" lengthAdjust="spacingAndGlyphs" text-anchor="middle" stroke="#f3f4f6" stroke-width="0.3">0</text></svg>
<div class="a" style="left:1069px;top:749px;width:264px;height:4px;background:#e5e7eb;border-radius:2px"></div>
<div class="a" style="left:1069px;top:741px;width:20px;height:20px;background:#ffffff;border-radius:50%;box-shadow:0 0 0 1px rgba(0,0,0,.3),0 1px 2px rgba(0,0,0,.5)"></div>
<div class="a t" style="left:1358px;top:692px;font-size:14px;line-height:20px;color:#e5e7eb;font-weight:normal;-webkit-text-stroke:0.2px #e5e7eb">学习率调节器</div>
<div class="a t" style="left:1358px;top:714px;font-size:12px;line-height:16px;color:#9ca3af;font-weight:normal;">学习率调度器的名称。</div>
<div class="a" style="left:1358px;top:739px;width:264px;height:40px;border:1px solid #374151;border-radius:8px;box-sizing:border-box;background:#1f2937"></div>
<svg class="a" style="left:1586.0px;top:757.5px" width="10" height="5"><path d="M0 0H10L5.0 5Z" fill="#e5e7eb"/></svg>
<svg class="a" style="left:1374.4px;top:747.0px" width="58" height="22"><text x="0.0" y="16.8" font-size="14" fill="#f3f4f6" font-weight="normal" textLength="38.9" lengthAdjust="spacingAndGlyphs" text-anchor="start" stroke="#f3f4f6" stroke-width="0.2">cosine</text></svg>
<div class="a" style="left:189px;top:806px;width:1446px;height:60px;border:1px solid #374151;border-radius:8px;box-sizing:border-box;background:#1f2937"></div>
<div class="a t" style="left:202px;top:816px;font-size:14px;line-height:20px;color:#e5e7eb;font-weight:normal;-webkit-text-stroke:0.2px #e5e7eb">其它参数设置</div>
<svg class="a" style="left:1611px;top:822px" width="11" height="11" viewBox="0 0 11 11"><path d="M0 5.5L11 0V11Z" fill="#f3f4f6"/></svg>
<div class="a t" style="left:1300px;top:794px;font-size:30px;line-height:42px;color:rgb(200,200,200)">CSDN @<span style="font-size:32px">逻辑魔法师</span>Jack</div>
</body></html>
